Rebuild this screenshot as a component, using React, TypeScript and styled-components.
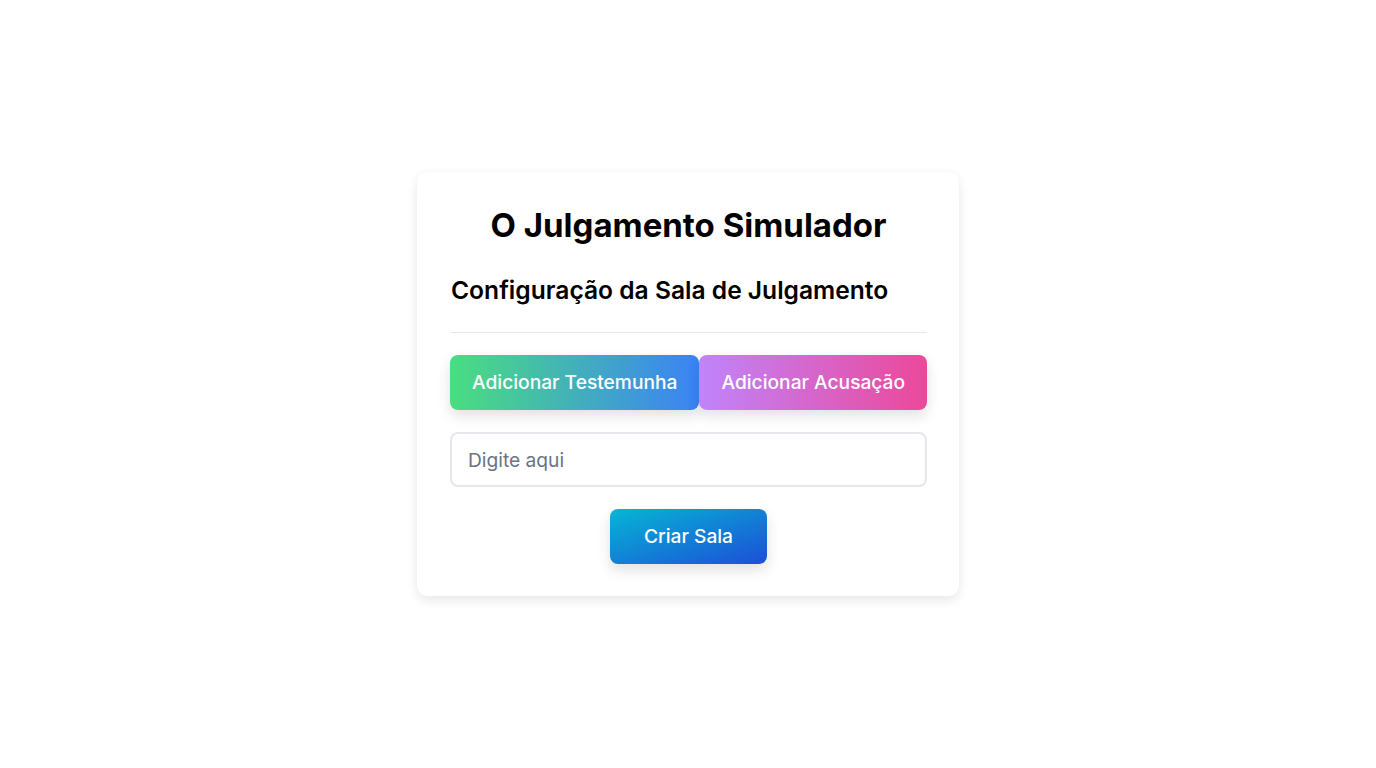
import React, { useState } from "react";
import styled, { createGlobalStyle } from "styled-components";

const GlobalStyle = createGlobalStyle`
  * {
    box-sizing: border-box;
  }
  body {
    margin: 0;
    background: #ffffff;
    font-family: Inter, "Noto Sans", sans-serif;
    color: #000000;
  }
`;

const Page = styled.div`
  min-height: 100vh;
  display: flex;
  align-items: center;
  justify-content: center;
`;

const Card = styled.div`
  width: 542px;
  padding: 34px 32px 32px 33px;
  background: #ffffff;
  border-radius: 10px;
  box-shadow: 0 4px 12px rgba(0, 0, 0, 0.1);
  display: flex;
  flex-direction: column;
`;

const Title = styled.h1`
  margin: 0 0 31px;
  font-size: 33px;
  line-height: 39px;
  font-weight: 700;
  text-align: center;
`;

const Subtitle = styled.h2`
  margin: 0;
  padding: 0 1px 27px;
  font-size: 24.6px;
  line-height: 29px;
  font-weight: 600;
  border-bottom: 1px solid #e5e7eb;
`;

const ActionRow = styled.div`
  display: flex;
  margin-top: 22px;
`;

const GradientButton = styled.button<{ $from: string; $to: string; $angle?: string }>`
  border: none;
  border-radius: 8px;
  padding: 14px 22px;
  font-family: inherit;
  font-size: 19.2px;
  line-height: 27px;
  font-weight: 500;
  white-space: nowrap;
  color: #ffffff;
  cursor: pointer;
  background: linear-gradient(${(p) => p.$angle || "to right"}, ${(p) => p.$from}, ${(p) => p.$to});
  box-shadow: 0 6px 14px rgba(0, 0, 0, 0.12);
`;

const TextInput = styled.input`
  margin-top: 22px;
  width: 100%;
  height: 55px;
  padding: 0 16px;
  border: 2px solid #e5e7eb;
  border-radius: 8px;
  font-family: inherit;
  font-size: 19.2px;
  color: #111827;
  outline: none;
  &::placeholder {
    color: #6b7280;
  }
`;

const SubmitRow = styled.div`
  display: flex;
  justify-content: center;
  margin-top: 22px;
`;

const SubmitButton = styled(GradientButton)`
  padding: 14px 33.5px;
`;

export default function App() {
  const [value, setValue] = useState("");

  return (
    <>
      <GlobalStyle />
      <Page>
        <Card>
          <Title>O Julgamento Simulador</Title>
          <Subtitle>Configuração da Sala de Julgamento</Subtitle>
          <ActionRow>
            <GradientButton $from="#4ade80" $to="#3b82f6">
              Adicionar Testemunha
            </GradientButton>
            <GradientButton $from="#c084fc" $to="#ec4899">
              Adicionar Acusação
            </GradientButton>
          </ActionRow>
          <TextInput
            placeholder="Digite aqui"
            value={value}
            onChange={(e) => setValue(e.target.value)}
          />
          <SubmitRow>
            <SubmitButton $from="#06b6d4" $to="#1d4ed8" $angle="to bottom right">
              Criar Sala
            </SubmitButton>
          </SubmitRow>
        </Card>
      </Page>
    </>
  );
}
